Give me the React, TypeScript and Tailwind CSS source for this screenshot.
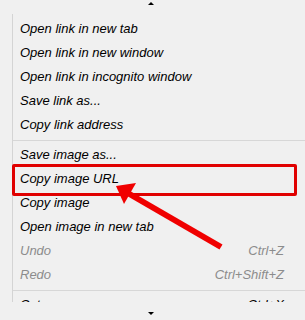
import React from "react";

type Item = { label: string; shortcut?: string; disabled?: boolean } | "sep";

const items: Item[] = [
  { label: "Open link in new tab" },
  { label: "Open link in new window" },
  { label: "Open link in incognito window" },
  { label: "Save link as..." },
  { label: "Copy link address" },
  "sep",
  { label: "Save image as..." },
  { label: "Copy image URL" },
  { label: "Copy image" },
  { label: "Open image in new tab" },
  { label: "Undo", shortcut: "Ctrl+Z", disabled: true },
  { label: "Redo", shortcut: "Ctrl+Shift+Z", disabled: true },
  "sep",
  { label: "Cut", shortcut: "Ctrl+X" },
];

export default function App() {
  return (
    <div
      className="relative w-[305px] h-[320px] bg-[#f0f0f0] overflow-hidden flex flex-col"
      style={{ fontFamily: '"Liberation Sans", Arial, sans-serif' }}
    >
      <div className="h-[14px] flex justify-center pt-[2px]">
        <div className="w-0 h-0 border-l-[3px] border-r-[3px] border-b-[3px] border-l-transparent border-r-transparent border-b-black ml-[-3px]" />
      </div>
      <div className="h-[288px] overflow-hidden ml-[12px] border-l border-[#d4d4d4]">
        <div className="pt-[3px] flex flex-col">
          {items.map((it, i) =>
            it === "sep" ? (
              <div key={i} className="h-[6px] flex items-center">
                <div className="h-px w-full bg-[#d7d7d7]" />
              </div>
            ) : (
              <div
                key={i}
                className={`h-[24px] flex items-center justify-between pl-[7px] pr-[21px] text-[13px] italic ${
                  it.disabled ? "text-[#8c8c8c]" : "text-black"
                }`}
              >
                <span>{it.label}</span>
                {it.shortcut && <span>{it.shortcut}</span>}
              </div>
            )
          )}
        </div>
      </div>
      <div className="flex-1 flex justify-center pt-[10px]">
        <div className="w-0 h-0 border-l-[3px] border-r-[3px] border-t-[3px] border-l-transparent border-r-transparent border-t-black ml-[-3px]" />
      </div>

      {/* annotation: red highlight box */}
      <div className="absolute left-[12px] top-[164px] w-[285px] h-[32px] border-[3px] border-[#e00000] rounded-[2px]" />
      {/* annotation: red arrow */}
      <svg className="absolute left-0 top-0" width="305" height="320" viewBox="0 0 305 320">
        <line x1="221" y1="247" x2="126" y2="192" stroke="#f00000" strokeWidth="6" strokeLinecap="butt" />
        <polygon points="116,186 136,183 124,204" fill="#f00000" />
      </svg>
    </div>
  );
}
